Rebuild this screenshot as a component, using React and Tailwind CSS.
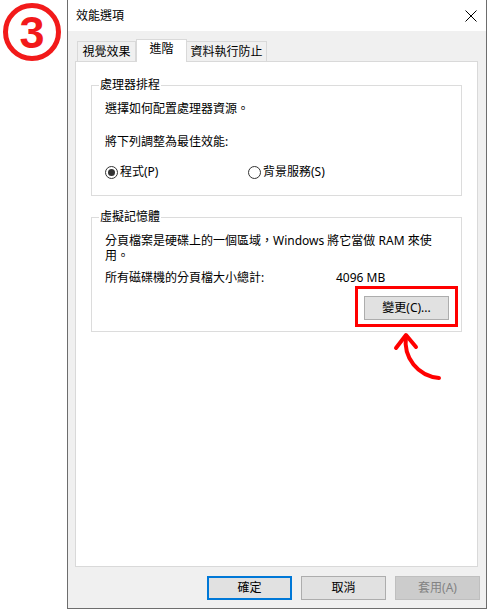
import React from "react";

const ui = "font-['Noto_Sans','Noto_Sans_CJK_TC',sans-serif] text-[12px] text-black";

function Radio({checked, label}) {
  return (
    <div className="flex items-center gap-[2px]">
      <span className="w-[13px] h-[13px] rounded-full border border-[#333] bg-white flex items-center justify-center">
        {checked && <span className="w-[7px] h-[7px] rounded-full bg-[#333]" />}
      </span>
      <span>{label}</span>
    </div>
  );
}

function GroupBox({title, className, children}) {
  return (
    <fieldset className={`border border-[#dcdcdc] mx-[15px] ${className}`}>
      <legend className="ml-[7px] px-[1px] leading-[16px]">{title}</legend>
      {children}
    </fieldset>
  );
}

export default function App() {
  return (
    <div className={`w-[488px] h-[610px] bg-white flex ${ui}`}>
      {/* step badge */}
      <div className="w-[67px] pt-[3px] pl-[3px]">
        <div className="w-[58px] h-[58px] rounded-full border-[5px] border-[#f21a1a] flex items-center justify-center">
          <span className="font-['Liberation_Sans',sans-serif] font-bold text-[45px] leading-none text-[#f21a1a]">3</span>
        </div>
      </div>

      {/* dialog window */}
      <div className="w-[420px] h-[609px] border border-t-0 border-[#6d6d6d] bg-[#f0f0f0] flex flex-col relative">
        {/* title bar */}
        <div className="h-[31px] bg-white flex items-center justify-between pl-[8px] pr-[8px]">
          <span className="leading-[16px]">效能選項</span>
          <svg width="12" height="12" viewBox="0 0 12 12" className="mr-[1px]">
            <path d="M0.5 0.5L11.5 11.5M11.5 0.5L0.5 11.5" stroke="#000" strokeWidth="1" fill="none" />
          </svg>
        </div>

        {/* tabs */}
        <div className="pt-[8px] pl-[9px] flex items-end h-[30px]">
          <div className="w-[59px] h-[20px] border border-b-0 border-[#d9d9d9] bg-[#f0f0f0] flex items-center justify-center leading-[16px]">視覺效果</div>
          <div className="w-[51px] h-[23px] -mb-px relative z-10 border border-b-0 border-[#d9d9d9] bg-white flex items-start justify-center pt-[1px] leading-[16px]">進階</div>
          <div className="w-[80px] h-[20px] border border-b-0 border-l-0 border-[#d9d9d9] bg-[#f0f0f0] flex items-center justify-center leading-[16px]">資料執行防止</div>
        </div>

        {/* tab page */}
        <div className="ml-[7px] w-[403px] h-[506px] border border-[#d9d9d9] bg-white pt-[15px]">
          <GroupBox title="處理器排程" className="pb-[15px]">
            <div className="pl-[13px] pt-[8px] leading-[16px]">
              <p>選擇如何配置處理器資源。</p>
              <p className="mt-[17px]">將下列調整為最佳效能:</p>
              <div className="mt-[14px] flex">
                <div className="w-[143px]"><Radio checked label="程式(P)" /></div>
                <Radio label="背景服務(S)" />
              </div>
            </div>
          </GroupBox>

          <GroupBox title="虛擬記憶體" className="mt-[13px] pb-[4px]">
            <div className="pl-[13px] pt-[8px]">
              <p className="leading-[15px]">分頁檔案是硬碟上的一個區域，Windows 將它當做 RAM 來使<br />用。</p>
              <div className="mt-[7px] flex leading-[16px]">
                <span className="w-[231px]">所有磁碟機的分頁檔大小總計:</span>
                <span>4096 MB</span>
              </div>
            </div>
            <div className="flex justify-end pr-[3px]">
              <div className="border-[3px] border-[#ff0000] pt-[7px] pb-[4px] px-[6px]">
                <button className="w-[85px] h-[24px] border border-[#adadad] bg-[#e1e1e1] leading-[16px]">變更(C)...</button>
              </div>
            </div>
          </GroupBox>
        </div>

        {/* footer buttons */}
        <div className="mt-[9px] flex justify-end gap-[9px] pr-[6px]">
          <button className="w-[85px] h-[24px] border-2 border-[#0078d7] bg-[#e1e1e1] leading-[16px]">確定</button>
          <button className="w-[85px] h-[24px] border border-[#adadad] bg-[#e1e1e1] leading-[16px]">取消</button>
          <button className="w-[85px] h-[24px] border border-[#bfbfbf] bg-[#cccccc] text-[#838383] leading-[16px]">套用(A)</button>
        </div>

        {/* annotation arrow */}
        <svg className="absolute left-[318px] top-[328px]" width="60" height="60" viewBox="0 0 60 60">
          <path d="M20 8 C 17 30, 32 48, 53 50" stroke="#ff0000" strokeWidth="4" fill="none" strokeLinecap="round" />
          <path d="M10 20 L20 7 L30 19" stroke="#ff0000" strokeWidth="4" fill="none" strokeLinecap="round" strokeLinejoin="round" />
        </svg>
      </div>
    </div>
  );
}
